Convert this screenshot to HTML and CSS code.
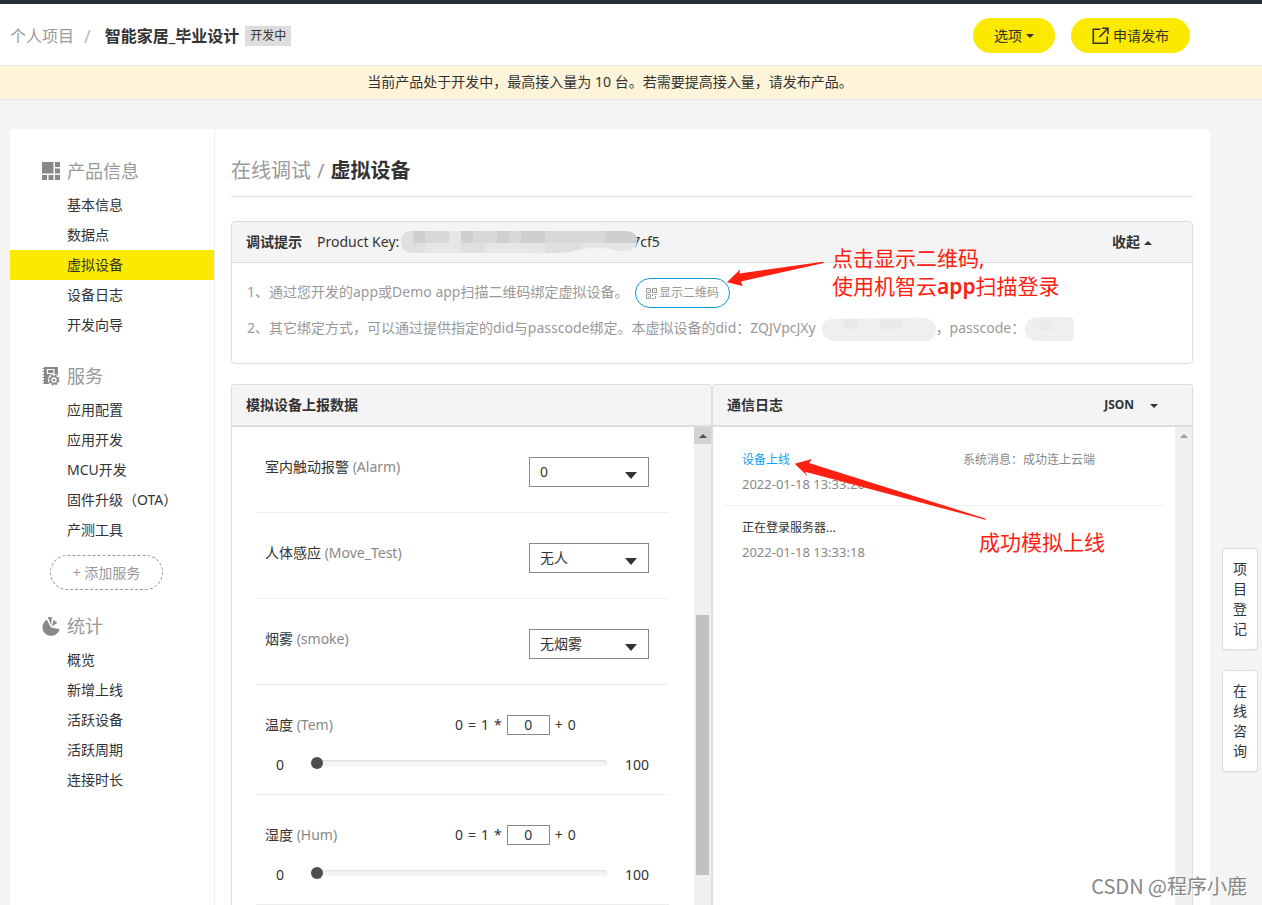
FILE: index.html
```html
<!DOCTYPE html>
<html lang="zh-CN">
<head>
<meta charset="utf-8">
<title>虚拟设备</title>
<link rel="stylesheet" href="styles.css">
</head>
<body>
<div class="app">
  <header class="topbar">
    <nav class="crumbs">
      <a class="crumb-link" href="#">个人项目</a>
      <span class="crumb-sep">/</span>
      <h1 class="project-name">智能家居_毕业设计</h1>
      <span class="tag">开发中</span>
    </nav>
    <div class="actions">
      <button class="pill" type="button">选项<span class="caret caret-down"></span></button>
      <button class="pill" type="button">
        <svg class="pill-icon" viewBox="0 0 18 18" width="18" height="18" fill="none" stroke="#333" stroke-width="1.6"><path d="M8.500 2.300H1.300v13.900h14V9.500M10 1.300h6v6M16 1.300 7.500 10"/></svg>申请发布</button>
    </div>
  </header>
  <p class="notice">当前产品处于开发中，最高接入量为 10 台。若需要提高接入量，请发布产品。</p>

  <div class="shell">
    <aside class="sidebar">
      <section class="menu">
        <h2 class="menu-title">
          <svg width="18" height="18" viewBox="0 0 18 18" fill="#888"><path d="M0 0h11.500v11.500H0zM13 0h5v5h-5zM13 6.500h5v5h-5zM0 13h5v5H0zM6.500 13h5v5h-5zM13 13h5v5h-5z"/></svg>产品信息</h2>
        <a class="menu-item" href="#">基本信息</a>
        <a class="menu-item" href="#">数据点</a>
        <a class="menu-item active" href="#">虚拟设备</a>
        <a class="menu-item" href="#">设备日志</a>
        <a class="menu-item" href="#">开发向导</a>
      </section>
      <section class="menu">
        <h2 class="menu-title">
          <svg width="18" height="19" viewBox="0 0 18 19"><path fill="#888" d="M2 0h14v8H2zM2 7h8v10H2z"/><path stroke="#888" stroke-width="1.200" d="M.5 1.500h2M.5 4.500h2M.5 7.500h2M.5 10.500h2M.5 13.500h2M.5 16h2"/><path fill="none" stroke="#fff" stroke-width="1.200" d="M5.500 2.500h6.500v4H5.500z"/><circle cx="12" cy="13" r="6.200" fill="#fff"/><circle cx="12" cy="13" r="4.600" fill="none" stroke="#888" stroke-width="1.800" stroke-dasharray="2.200 1.410"/><circle cx="12" cy="13" r="3.500" fill="none" stroke="#888" stroke-width="1.600"/><circle cx="12" cy="13" r="1.300" fill="#888"/></svg>服务</h2>
        <a class="menu-item" href="#">应用配置</a>
        <a class="menu-item" href="#">应用开发</a>
        <a class="menu-item" href="#">MCU开发</a>
        <a class="menu-item" href="#">固件升级（OTA）</a>
        <a class="menu-item" href="#">产测工具</a>
        <button class="add-service" type="button">+ 添加服务</button>
      </section>
      <section class="menu">
        <h2 class="menu-title">
          <svg width="18" height="19" viewBox="0 0 18 19" fill="#888"><path d="M9 10.500 4.800 2.800A8.600 8.600 0 1 0 17.500 12z"/><path d="M5.800 0h4l-.6 8.300zM11.500 2.800l3.800 2.900-5.300 3.800z"/></svg>统计</h2>
        <a class="menu-item" href="#">概览</a>
        <a class="menu-item" href="#">新增上线</a>
        <a class="menu-item" href="#">活跃设备</a>
        <a class="menu-item" href="#">活跃周期</a>
        <a class="menu-item" href="#">连接时长</a>
      </section>
    </aside>

    <main class="content">
      <h2 class="page-title"><span class="muted">在线调试<span class="slash">/</span></span>虚拟设备</h2>

      <section class="panel">
        <header class="panel-head">
          <h3>调试提示</h3>
          <span class="product-key">Product Key:<svg class="mask key-mask" width="236" height="24" viewBox="0 0 236 24"><defs><clipPath id="k"><path d="M10 1h216q10 1 10 10t-10 10q-10 1-18-2-20-3-40 3-20 2-40 1H12Q0 22 0 12T10 1z"/></clipPath></defs><g clip-path="url(#k)"><path fill="#e6e6e6" d="M0 0h236v24H0z"/><path fill="#cfcfd0" d="M12 0h12v13H12zM60 0h12v13H60zM96 0h12v13H96zM120 0h24v13h-24zM204 0h32v13h-32z"/><path fill="#d8d8d6" d="M24 0h24v13H24zM72 0h24v13H72zM108 0h12v13h-12zM144 0h60v13h-60z"/><path fill="#dfdfdf" d="M0 0h12v24H0zM12 13h12v11H12zM60 13h24v11H60zM144 13h36v11h-36z"/></g></svg>7cf5</span>
          <button class="text-button" type="button">收起<span class="caret caret-up"></span></button>
        </header>
        <div class="tips">
          <p class="tip">1、通过您开发的app或Demo app扫描二维码绑定虚拟设备。
            <button class="qr-button" type="button"><svg width="11" height="11" viewBox="0 0 11 11" fill="none" stroke="#999"><path d="M.5.5h4v4h-4zM6.500.5h4v4h-4zM.5 6.500h4v4h-4zM2 2.500h1M8 2.500h1M2 8.500h1M6.500 6v2M8.500 6.500h2M6 10.500h2M9.500 8v3"/></svg>显示二维码</button></p>
          <p class="tip">2、其它绑定方式，可以通过提供指定的did与passcode绑定。本虚拟设备的did：ZQJVpcJXy<svg class="mask id-mask" width="114" height="24" viewBox="0 0 114 24"><path fill="#efefef" d="M10 2 86 1q28-3 28 11 0 12-12 12H12Q0 22 0 12T10 2z"/><path fill="#e8e9ea" d="M22 2h14v10H22zM58 2h22v10H58z"/></svg>，passcode：<svg class="mask" width="50" height="24" viewBox="0 0 50 24"><path fill="#efefef" d="M12 0h32q5 0 5 5v14q0 5-5 5H12Q0 22 0 12T12 0z"/><path fill="#e9eaea" d="M14 4h14v9H14z"/></svg></p>
        </div>
      </section>

      <div class="columns">
        <section class="panel tall">
          <header class="panel-head thick"><h3>模拟设备上报数据</h3></header>
          <div class="scroller">
            <form class="fields">
              <div class="field">
                <label for="alarm">室内触动报警 <span class="muted">(Alarm)</span></label>
                <span class="select"><select id="alarm"><option>0</option><option>1</option></select></span>
              </div>
              <div class="field">
                <label for="move">人体感应 <span class="muted">(Move_Test)</span></label>
                <span class="select"><select id="move"><option>无人</option><option>有人</option></select></span>
              </div>
              <div class="field">
                <label for="smoke">烟雾 <span class="muted">(smoke)</span></label>
                <span class="select"><select id="smoke"><option>无烟雾</option><option>有烟雾</option></select></span>
              </div>
              <div class="field ranged">
                <label for="tem">温度 <span class="muted">(Tem)</span></label>
                <span class="formula"><span>0</span><span>=</span><span>1</span><span>*</span><input id="tem" type="text" value="0"><span>+</span><span>0</span></span>
                <div class="slider"><span>0</span><input type="range" aria-label="温度" min="0" max="100" value="0"><span>100</span></div>
              </div>
              <div class="field ranged">
                <label for="hum">湿度 <span class="muted">(Hum)</span></label>
                <span class="formula"><span>0</span><span>=</span><span>1</span><span>*</span><input id="hum" type="text" value="0"><span>+</span><span>0</span></span>
                <div class="slider"><span>0</span><input type="range" aria-label="湿度" min="0" max="100" value="0"><span>100</span></div>
              </div>
            </form>
            <div class="scrollbar"><span class="scroll-up on"></span><span class="scroll-thumb"></span></div>
          </div>
        </section>

        <section class="panel tall">
          <header class="panel-head thick">
            <h3>通信日志</h3>
            <button class="text-button json" type="button">JSON<span class="caret caret-down"></span></button>
          </header>
          <div class="scroller">
            <div class="logs">
              <article class="log">
                <div><a href="#">设备上线</a><time>2022-01-18 13:33:20</time></div>
                <p>系统消息：成功连上云端</p>
              </article>
              <article class="log">
                <div><strong>正在登录服务器...</strong><time>2022-01-18 13:33:18</time></div>
              </article>
            </div>
            <div class="scrollbar"><span class="scroll-up"></span></div>
          </div>
        </section>
      </div>
    </main>
  </div>

  <div class="side-tabs">
    <button type="button">项目登记</button>
    <button type="button">在线咨询</button>
  </div>

  <svg class="arrows" width="1262" height="905" viewBox="0 0 1262 905" fill="#ff2012"><path d="M727 282.300 740.300 269.300 739.300 273.500 823 261.700 824 263 741 281.500 742.700 286zM794.700 463.700 812 459 809 463 986 518.700 985.300 519.700 805 471.700 807.300 476z"/></svg>
  <p class="callout callout-scan">点击显示二维码,<br>使用机智云<b>app</b>扫描登录</p>
  <p class="callout callout-online">成功模拟上线</p>
  <p class="watermark">CSDN @程序小鹿</p>
</div>
</body>
</html>
```
FILE: styles.css
```css
* { box-sizing: border-box; }
body, h1, h2, h3, p { margin: 0; }
body {
  font: 14px/20px "Noto Sans", "Noto Sans CJK SC", sans-serif;
  color: #333;
  background: #f4f4f4;
}
button, input, select { font: inherit; color: inherit; }
button { cursor: pointer; }
a { color: inherit; text-decoration: none; }
.muted { color: #888; font-weight: 400; }

.app {
  position: relative;
  display: flex;
  flex-direction: column;
  height: 100vh;
  overflow: hidden;
}

/* Header */
.topbar {
  display: flex;
  flex: none;
  justify-content: space-between;
  align-items: center;
  height: 66px;
  padding: 2px 72px 0 10px;
  border-top: 4px solid #272e36;
  border-bottom: 1px solid #e4e4e4;
  background: #fff;
}
.crumbs { display: flex; align-items: center; font-size: 16px; }
.crumb-link { color: #999; }
.crumb-sep { margin: 0 14px 0 10px; font-size: 18px; color: #bbb; }
.project-name { font-size: 16px; font-weight: 700; }
.tag {
  margin-left: 6px;
  padding: 0 5px;
  font-size: 12px;
  background: #ddd;
}
.actions { display: flex; gap: 16px; }
.pill {
  display: flex;
  align-items: center;
  height: 35px;
  padding: 0 21px;
  border: 0;
  border-radius: 18px;
  background: #fbe900;
}
.pill-icon { margin-right: 3px; }
.caret {
  display: inline-block;
  margin-left: 4px;
  border: 4px solid transparent;
}
.caret-down { border-top-color: #333; border-bottom: 0; }
.caret-up { border-bottom-color: #333; border-top: 0; vertical-align: middle; }
.notice {
  flex: none;
  height: 34px;
  padding: 0 52px 0 10px;
  line-height: 32px;
  text-align: center;
  background: #fdf4d9;
  border-bottom: 1px solid #e8e8e8;
}

/* Body */
.shell {
  display: flex;
  flex: 1;
  min-height: 0;
  margin: 29px 52px 0 10px;
  border-radius: 4px 4px 0 0;
  background: #fff;
}
.sidebar {
  flex: none;
  width: 205px;
  padding-top: 6px;
  border-right: 1px solid #eee;
}
.menu { padding-top: 17px; }
.menu-title {
  display: flex;
  align-items: center;
  gap: 7px;
  height: 38px;
  padding-left: 32px;
  font-size: 18px;
  font-weight: 400;
  color: #999;
}
.menu-item { display: block; padding-left: 57px; line-height: 30px; }
.menu-item.active { background: #fbe900; }
.add-service {
  display: block;
  width: 113px;
  height: 35px;
  margin: 10px 0 0 40px;
  border: 1px dashed #999;
  border-radius: 18px;
  color: #999;
  background: none;
}
.content {
  display: flex;
  flex-direction: column;
  flex: 1;
  min-width: 0;
  padding: 14px 17px 0 16px;
}
.page-title {
  flex: none;
  height: 54px;
  margin-bottom: 24px;
  border-bottom: 1px solid #ddd;
  font-size: 20px;
  line-height: 56px;
}
.page-title .muted { color: #999; }
.page-title .slash { margin: 0 6px; }

/* Panels */
.panel {
  border: 1px solid #ddd;
  border-radius: 4px;
}
.panel-head {
  display: flex;
  flex: none;
  align-items: center;
  height: 41px;
  padding: 0 40px 0 14px;
  border-bottom: 1px solid #ddd;
  border-radius: 4px 4px 0 0;
  background: #f4f4f4;
}
.panel-head.thick { height: 42px; border-bottom-width: 2px; padding-right: 34px; }
.panel-head h3 { font-size: 14px; font-weight: 700; }
.product-key { display: flex; align-items: center; margin-left: 15px; }
.mask { flex: none; position: relative; vertical-align: middle; }
.key-mask { margin: 0 -5px 0 2px; }
.id-mask { margin-left: 6px; }
.text-button {
  margin-left: auto;
  padding: 0;
  border: 0;
  background: none;
  font-weight: 700;
}
.json { font-size: 12px; }
.json .caret { margin-left: 16px; vertical-align: middle; }
.tips { padding: 11px 15px 17px; color: #999; }
.tip { line-height: 36px; white-space: nowrap; }
.qr-button {
  display: inline-flex;
  align-items: center;
  justify-content: center;
  gap: 2px;
  width: 95px;
  height: 30px;
  margin-left: 3px;
  padding: 0;
  border: 1px solid #1296db;
  border-radius: 15px;
  background: #fff;
  font-size: 12px;
  vertical-align: middle;
}
.columns {
  display: grid;
  grid-template-columns: 1fr 1fr;
  flex: 1;
  min-height: 0;
  margin-top: 20px;
}
.tall {
  display: flex;
  flex-direction: column;
  min-height: 0;
  border-bottom: 0;
  border-radius: 4px 4px 0 0;
}
.scroller { display: flex; flex: 1; min-height: 0; overflow: hidden; }

/* Reported data */
.fields { flex: 1; padding: 0 25px 0 24px; }
.field {
  display: flex;
  flex-wrap: wrap;
  justify-content: space-between;
  align-items: flex-start;
  align-content: flex-start;
  height: 86px;
  padding: 30px 20px 0 9px;
  border-bottom: 1px solid #eee;
}
.select { position: relative; width: 120px; height: 30px; }
.select::after {
  content: "";
  position: absolute;
  right: 12px;
  bottom: 8px;
  border: 6px solid transparent;
  border-top: 7px solid #333;
  border-bottom: 0;
  pointer-events: none;
}
select {
  width: 100%;
  height: 100%;
  padding: 0 10px;
  border: 1px solid #888;
  border-radius: 0;
  background: #fff;
  appearance: none;
}
.ranged { height: 110px; }
.formula { display: flex; gap: 5px; width: 194px; }
.formula input {
  width: 43px;
  height: 20px;
  padding: 0;
  border: 1px solid #888;
  text-align: center;
}
.slider {
  display: flex;
  width: 100%;
  margin-top: 20px;
  padding-left: 11px;
}
.slider input {
  flex: 1;
  min-width: 0;
  height: 16px;
  margin: 0 18px 0 27px;
  appearance: none;
  background: none;
}
.slider input::-webkit-slider-runnable-track {
  height: 6px;
  border-radius: 3px;
  background: #f5f5f5;
  box-shadow: inset 0 1px 2px rgba(0, 0, 0, 0.1);
}
.slider input::-webkit-slider-thumb {
  appearance: none;
  width: 12px;
  height: 12px;
  margin-top: -3px;
  border-radius: 50%;
  background: #4d4d4d;
}
.scrollbar { flex: none; width: 17px; background: #f0f0f0; }
.scroll-up {
  display: grid;
  place-items: center;
  height: 17px;
  color: #a3a3a3;
}
.scroll-up.on { color: #505050; background: #d2d2d2; }
.scroll-up::before {
  content: "";
  border: 4px solid transparent;
  border-top: 0;
  border-bottom-color: currentColor;
}
.scroll-thumb {
  display: block;
  height: 260px;
  margin: 171px 2px 0;
  background: #c1c1c1;
}

/* Communication log */
.logs { flex: 1; padding: 11px 10px 0; font-size: 12px; line-height: 24px; }
.log {
  display: grid;
  grid-template-columns: 1fr 1fr;
  padding: 10px 0 9px;
  border-bottom: 1px solid #eee;
  color: #888;
}
.log:last-child { border-bottom: 0; }
.log > * { padding-left: 19px; }
.log a { color: #0e9ff5; }
.log strong { font-weight: 400; color: #333; }
.log time { display: block; font-size: 13px; }

/* Floating tabs and notes */
.side-tabs {
  position: absolute;
  top: 548px;
  right: 4px;
  display: grid;
  gap: 20px;
}
.side-tabs button {
  width: 36px;
  padding: 10px 10px;
  border: 1px solid #ddd;
  border-radius: 4px;
  background: #fff;
  box-shadow: 0 1px 1px rgba(0, 0, 0, 0.05);
}
.arrows { position: absolute; top: 0; left: 0; pointer-events: none; }
.callout {
  position: absolute;
  font-size: 21px;
  line-height: 28px;
  color: #ff2012;
}
.callout b { font-weight: 600; }
.callout-scan { top: 244px; left: 832px; }
.callout-online { top: 528px; left: 979px; }
.watermark {
  position: absolute;
  right: 15px;
  bottom: 9px;
  font-family: "Noto Sans CJK SC", sans-serif;
  font-size: 20px;
  color: #888;
  text-shadow: 1px 1px 0 #fff;
}
```
